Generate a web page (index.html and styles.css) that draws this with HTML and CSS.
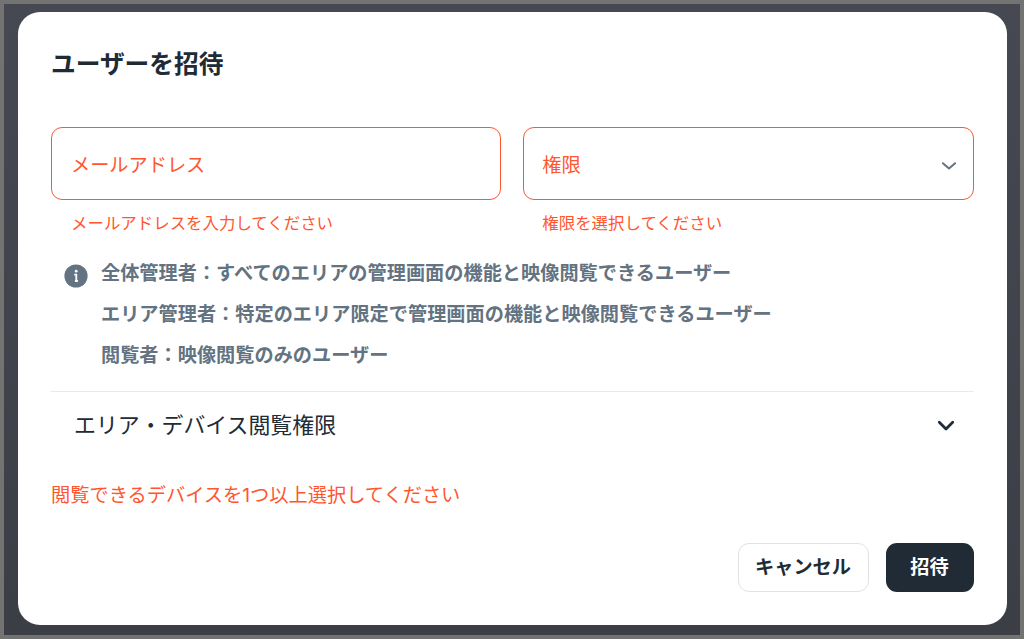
FILE: index.html
```html
<!DOCTYPE html>
<html lang="ja">
<head>
<meta charset="UTF-8">
<meta name="viewport" content="width=device-width, initial-scale=1.0">
<title>ユーザーを招待</title>
<link rel="stylesheet" href="styles.css">
</head>
<body>

<div class="modal">
    <h2 class="title">ユーザーを招待</h2>

    <div class="fields">
        <div class="field">
            <div class="input">メールアドレス</div>
            <p class="helper">メールアドレスを入力してください</p>
        </div>
        <div class="field">
            <div class="input">
                <span>権限</span>
                <svg class="select-arrow" width="16" height="10" viewBox="0 0 16 10"><path d="M1.9 2.2 L8 7.4 L14.1 2.2"/></svg>
            </div>
            <p class="helper">権限を選択してください</p>
        </div>
    </div>

    <div class="info">
        <svg class="info-icon" width="24" height="24" viewBox="0 0 24 24">
            <circle cx="12" cy="12" r="11.6" fill="#637381"/>
            <circle cx="12.2" cy="7.2" r="1.4" fill="#fff"/>
            <path d="M10.2 10.7h2.1v6.6M10.9 17h3" fill="none" stroke="#fff" stroke-width="1.8"/>
        </svg>
        <div class="info-text">
            <p>全体管理者：すべてのエリアの管理画面の機能と映像閲覧できるユーザー</p>
            <p>エリア管理者：特定のエリア限定で管理画面の機能と映像閲覧できるユーザー</p>
            <p>閲覧者：映像閲覧のみのユーザー</p>
        </div>
    </div>

    <div class="accordion">
        <span class="accordion-label">エリア・デバイス閲覧権限</span>
        <svg class="accordion-arrow" width="18" height="12" viewBox="0 0 18 12"><path d="M2.3 2.3 L9 8.9 L15.7 2.3"/></svg>
    </div>

    <p class="error">閲覧できるデバイスを<span class="num">1</span>つ以上選択してください</p>

    <div class="actions">
        <button class="btn cancel">キャンセル</button>
        <button class="btn submit">招待</button>
    </div>
</div>

</body>
</html>
```
FILE: styles.css
```css
* {
    box-sizing: border-box;
}

body {
    margin: 0;
    height: 639px;
    padding: 8px 13.5px 10px 14px;
    border: 4px solid #737371;
    background: linear-gradient(to bottom, #464951, #3b3e45);
    font-family: "Noto Sans CJK JP", sans-serif;
    color: #212b36;
    overflow: hidden;
}

p, h2 {
    margin: 0;
}

.modal {
    height: 613px;
    padding: 32px 33px 33px;
    background: #fff;
    border-radius: 22px;
}

.title {
    font-size: 24.7px;
    line-height: 36px;
    font-weight: 700;
}

.fields {
    display: flex;
    gap: 22px;
    margin-top: 47px;
}

.field {
    flex: 1;
}

.input {
    display: flex;
    justify-content: space-between;
    align-items: center;
    height: 73px;
    padding: 0 16px 0 19px;
    border: 1px solid #ff5630;
    border-radius: 11px;
    font-size: 19.2px;
    color: #ff5630;
}

.field + .field .input {
    padding-left: 18px;
}

.select-arrow {
    margin-top: 4px;
    fill: none;
    stroke: #637381;
    stroke-width: 2;
    stroke-linecap: round;
    stroke-linejoin: round;
}

.helper {
    margin: 10px 0 0 20px;
    font-size: 16.45px;
    line-height: 24px;
    color: #ff5630;
}

.field + .field .helper {
    margin-left: 19px;
}

.info {
    display: flex;
    margin-top: 18px;
    padding-left: 13px;
}

.info-icon {
    margin: 12px 13px 0 0;
}

.info-text {
    font-size: 19.2px;
    line-height: 41px;
    font-weight: 700;
    color: #637381;
}

/* expandable section */
.accordion {
    display: flex;
    justify-content: space-between;
    align-items: center;
    height: 68px;
    margin-top: 16px;
    padding: 0 19px 0 23px;
    border-top: 1px solid #e8eaec;
    font-size: 21.9px;
}

.accordion-label {
    padding-bottom: 4px;
}

.accordion-arrow {
    fill: none;
    stroke: #212b36;
    stroke-width: 2.8;
    stroke-linecap: round;
    stroke-linejoin: round;
}

.error {
    margin-top: 20px;
    font-size: 19.23px;
    line-height: 30px;
    color: #ff5630;
}

.num {
    font-family: Inter, sans-serif;
}

.actions {
    display: flex;
    justify-content: flex-end;
    gap: 17px;
    margin-top: 33px;
}

.btn {
    height: 49px;
    padding: 0 0 3px;
    border: none;
    border-radius: 11px;
    font-family: inherit;
    font-size: 19.2px;
    font-weight: 700;
}

.cancel {
    width: 131px;
    border: 1px solid #dfe3e8;
    background: #fff;
    color: #212b36;
}

.submit {
    width: 88px;
    background: #212b36;
    color: #fff;
}
```
